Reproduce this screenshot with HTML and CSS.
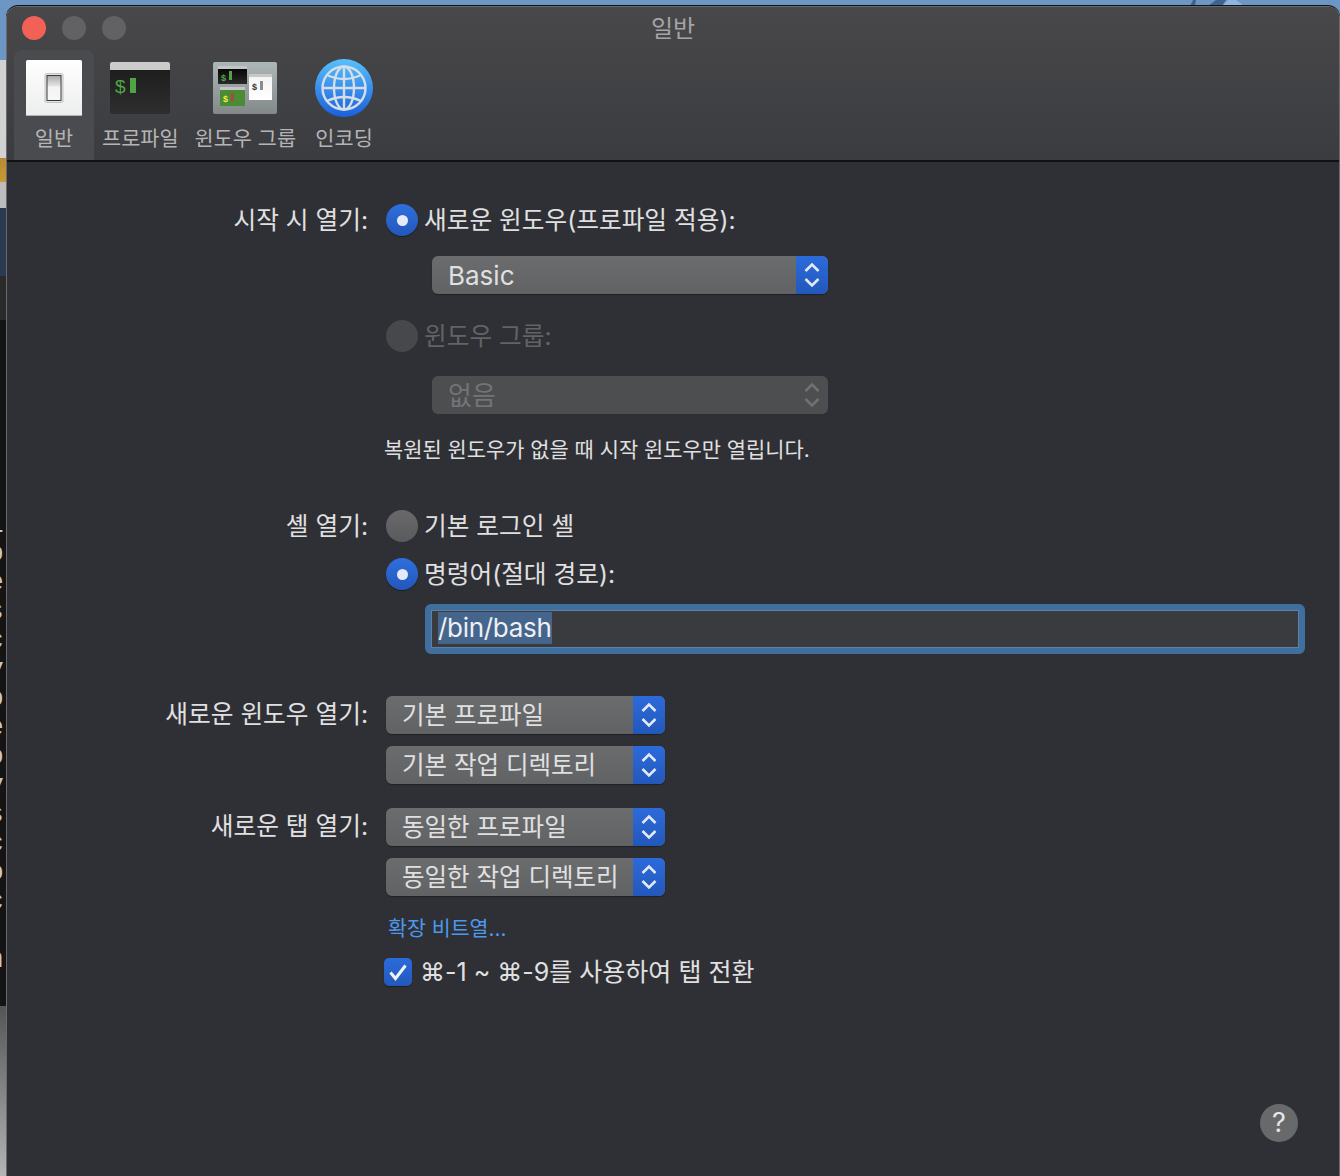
FILE: index.html
```html
<!DOCTYPE html>
<html lang="ko">
<head>
  <meta charset="UTF-8">
  <title>일반</title>
  <link rel="stylesheet" href="styles.css">
</head>
<body>
  <!-- Desktop behind the window -->
  <div class="desktop">
    <div class="seg seg-blue"></div>
    <div class="seg seg-grey"></div>
    <div class="seg seg-yellow"></div>
    <div class="seg seg-pale"></div>
    <div class="seg seg-navy"></div>
    <div class="seg seg-dark"></div>
    <div class="seg seg-term">
      <span>l</span><span>o</span><span>e</span><span>s</span><span>c</span><span>v</span><span>o</span><span>e</span><span>o</span><span>v</span><span>s</span><span>c</span><span>o</span><span>c</span><span>.</span><span>n</span><span>.</span>
    </div>
    <div class="seg seg-foot"></div>
  </div>
  <svg class="wallpaper" width="90" height="6" viewBox="0 0 90 6">
    <path d="M0 6 L3 0 L6 0 L5 6 Z M18 6 L26 0 L36 0 L32 6 Z" fill="#3f628f"/>
    <path d="M32 6 L38 0 L46 0 L54 6 Z" fill="#8fb4e0"/>
  </svg>

  <div class="window">
    <div class="toolbar">
      <div class="titlebar">
        <div class="lights">
          <span class="light light-red"></span>
          <span class="light"></span>
          <span class="light"></span>
        </div>
        <div class="title">일반</div>
      </div>
      <div class="tabs">
        <div class="tab tab-active">
          <svg class="tab-icon" width="56" height="56" viewBox="0 0 56 56">
            <defs>
              <linearGradient id="plate" x1="0" y1="0" x2="0" y2="1">
                <stop offset="0" stop-color="#ffffff"/><stop offset="1" stop-color="#eceded"/>
              </linearGradient>
              <linearGradient id="rocker" x1="0" y1="0" x2="0" y2="1">
                <stop offset="0" stop-color="#a9a9a9"/><stop offset="0.42" stop-color="#e4e4e4"/><stop offset="0.45" stop-color="#f4f4f6"/><stop offset="1" stop-color="#f7f7f9"/>
              </linearGradient>
            </defs>
            <rect width="56" height="56" rx="1.5" fill="url(#plate)"/>
            <rect x="0" y="55" width="56" height="1" fill="#b5b5b5"/>
            <rect x="19" y="13.5" width="18" height="29" rx="1.5" fill="#e3e3e3" stroke="#c4c4c4"/>
            <rect x="21" y="15.5" width="14" height="25" fill="url(#rocker)" stroke="#3a3a3a" stroke-width="1"/>
          </svg>
          <span>일반</span>
        </div>
        <div class="tab">
          <svg class="tab-icon" width="60" height="56" viewBox="0 0 60 56">
            <defs>
              <linearGradient id="term" x1="0" y1="0" x2="0" y2="1">
                <stop offset="0" stop-color="#1b1b1b"/><stop offset="1" stop-color="#2e2e2e"/>
              </linearGradient>
            </defs>
            <rect y="2" width="60" height="52" rx="2" fill="url(#term)"/>
            <path d="M0 10 V4 a2 2 0 0 1 2-2 H58 a2 2 0 0 1 2 2 V10 Z" fill="#cbcbc9"/>
            <text x="5" y="33" class="dollar" font-size="19" fill="#4fa546">$</text>
            <rect x="20" y="18" width="6" height="15" fill="#4fa546"/>
          </svg>
          <span>프로파일</span>
        </div>
        <div class="tab">
          <svg class="tab-icon" width="64" height="56" viewBox="0 0 64 56">
            <defs>
              <linearGradient id="group" x1="0" y1="0" x2="0" y2="1">
                <stop offset="0" stop-color="#adb6b8"/><stop offset="1" stop-color="#838989"/>
              </linearGradient>
              <linearGradient id="blk" x1="0" y1="0" x2="0" y2="1">
                <stop offset="0" stop-color="#000"/><stop offset="1" stop-color="#2a2a2a"/>
              </linearGradient>
              <linearGradient id="wht" x1="0" y1="0" x2="0" y2="1">
                <stop offset="0" stop-color="#f2f2f2"/><stop offset="1" stop-color="#ffffff"/>
              </linearGradient>
            </defs>
            <rect y="2" width="64" height="52" rx="2" fill="url(#group)"/>
            <rect x="5" y="6" width="29" height="18" fill="url(#blk)"/>
            <rect x="5" y="6" width="29" height="3" fill="#c5c5c5"/>
            <text x="8" y="21" class="dollar" font-size="9" font-weight="700" fill="#4fa546">$</text>
            <rect x="16" y="11" width="3" height="9" fill="#4fa546"/>
            <rect x="36" y="14" width="23" height="26" fill="url(#wht)"/>
            <rect x="36" y="14" width="23" height="3" fill="#c8c8c8"/>
            <text x="39" y="30" class="dollar" font-size="9" font-weight="700" fill="#333">$</text>
            <rect x="47" y="21" width="3" height="9" fill="#8c8c8c"/>
            <rect x="7" y="27" width="25" height="19" fill="#4c8b36"/>
            <rect x="7" y="27" width="25" height="3" fill="#c5c5c5"/>
            <text x="10" y="42" class="dollar" font-size="9" font-weight="700" fill="#f2ee3f">$</text>
            <rect x="18" y="33" width="3" height="8" fill="#a84a3e"/>
          </svg>
          <span>윈도우 그룹</span>
        </div>
        <div class="tab">
          <svg class="tab-icon" width="58" height="58" viewBox="0 0 58 58">
            <defs>
              <linearGradient id="ball" x1="0" y1="0" x2="0" y2="1">
                <stop offset="0" stop-color="#58c0fb"/><stop offset="1" stop-color="#1b60dc"/>
              </linearGradient>
            </defs>
            <circle cx="29" cy="29" r="29" fill="url(#ball)"/>
            <g fill="none" stroke="#d5dde6" stroke-width="2.4">
              <circle cx="29" cy="29" r="21.5"/>
              <ellipse cx="29" cy="29" rx="10" ry="21.5"/>
              <path d="M29 7.5 V50.5 M7.5 29 H50.5"/>
              <path d="M12 16 Q29 24 46 16 M12 42 Q29 34 46 42"/>
            </g>
          </svg>
          <span>인코딩</span>
        </div>
      </div>
    </div>

    <div class="content">
      <div class="row row-start">
        <div class="label">시작 시 열기:</div>
        <div class="controls">
          <div class="radio-line">
            <span class="radio radio-on"></span>
            <span>새로운 윈도우(프로파일 적용):</span>
          </div>
          <div class="select select-wide select-latin">
            <span>Basic</span>
            <span class="stepper">
              <svg width="16" height="28" viewBox="0 0 16 28"><path d="M1.5 10 L8 3.5 L14.5 10 M1.5 18 L8 24.5 L14.5 18"/></svg>
            </span>
          </div>
          <div class="radio-line disabled group-radio">
            <span class="radio"></span>
            <span>윈도우 그룹:</span>
          </div>
          <div class="select select-wide select-off">
            <span>없음</span>
            <span class="stepper">
              <svg width="16" height="28" viewBox="0 0 16 28"><path d="M1.5 10 L8 3.5 L14.5 10 M1.5 18 L8 24.5 L14.5 18"/></svg>
            </span>
          </div>
          <div class="note">복원된 윈도우가 없을 때 시작 윈도우만 열립니다.</div>
        </div>
      </div>

      <div class="row row-shell">
        <div class="label">셸 열기:</div>
        <div class="controls">
          <div class="radio-line">
            <span class="radio radio-plain"></span>
            <span>기본 로그인 셸</span>
          </div>
          <div class="radio-line radio-second">
            <span class="radio radio-on"></span>
            <span>명령어(절대 경로):</span>
          </div>
          <div class="field"><span class="field-text">/bin/bash</span></div>
        </div>
      </div>

      <div class="row row-window">
        <div class="label">새로운 윈도우 열기:</div>
        <div class="controls select-stack">
          <div class="select">
            <span>기본 프로파일</span>
            <span class="stepper">
              <svg width="16" height="28" viewBox="0 0 16 28"><path d="M1.5 10 L8 3.5 L14.5 10 M1.5 18 L8 24.5 L14.5 18"/></svg>
            </span>
          </div>
          <div class="select">
            <span>기본 작업 디렉토리</span>
            <span class="stepper">
              <svg width="16" height="28" viewBox="0 0 16 28"><path d="M1.5 10 L8 3.5 L14.5 10 M1.5 18 L8 24.5 L14.5 18"/></svg>
            </span>
          </div>
        </div>
      </div>

      <div class="row row-tab">
        <div class="label">새로운 탭 열기:</div>
        <div class="controls">
          <div class="select-stack">
            <div class="select">
              <span>동일한 프로파일</span>
              <span class="stepper">
                <svg width="16" height="28" viewBox="0 0 16 28"><path d="M1.5 10 L8 3.5 L14.5 10 M1.5 18 L8 24.5 L14.5 18"/></svg>
              </span>
            </div>
            <div class="select">
              <span>동일한 작업 디렉토리</span>
              <span class="stepper">
                <svg width="16" height="28" viewBox="0 0 16 28"><path d="M1.5 10 L8 3.5 L14.5 10 M1.5 18 L8 24.5 L14.5 18"/></svg>
              </span>
            </div>
          </div>
          <div class="link">확장 비트열...</div>
          <div class="check-line">
            <span class="checkbox">
              <svg width="28" height="28" viewBox="0 0 28 28"><path d="M6.5 14.5 L11.5 20.5 L21.5 7.5"/></svg>
            </span>
            <span>⌘-1 ~ ⌘-9를 사용하여 탭 전환</span>
          </div>
        </div>
      </div>

      <div class="help">?</div>
    </div>
  </div>
</body>
</html>
```

FILE: styles.css
```css
html, body {
  margin: 0;
  padding: 0;
  height: 1176px;
  overflow: hidden;
}

body {
  position: relative;
  background-color: #6d96c4;
  font-family: Inter, "Noto Sans CJK KR", sans-serif;
  color: #e0e0e1;
}

/* Desktop strip on the left */
.desktop {
  position: absolute;
  left: 0;
  top: 0;
  width: 6px;
  height: 1176px;
  overflow: hidden;
  display: flex;
  flex-direction: column;
}

.seg-blue { height: 60px; background-color: #6d96c4; }
.seg-grey { height: 98px; background-color: #d2d2d2; }
.seg-yellow { height: 24px; background: linear-gradient(#b98a35, #c69a35); }
.seg-pale { height: 26px; background-color: #bdbdbd; }
.seg-navy { height: 68px; background-color: #2a3a50; }
.seg-dark { height: 44px; background-color: #2a2a2a; }
.seg-foot { flex: 1; background: linear-gradient(#555556, #b4b4b4); }

.seg-term {
  height: 686px;
  box-sizing: border-box;
  padding-top: 190px;
  background-color: #141414;
  display: flex;
  flex-direction: column;
  font-family: "Liberation Mono", monospace;
  font-size: 28px;
  line-height: 29px;
  color: #c8c8c8;
}

.seg-term span {
  margin-left: -13px;
}

.wallpaper {
  position: absolute;
  left: 1190px;
  top: 0;
}

/* Window */
.window {
  position: absolute;
  left: 6px;
  top: 6px;
  width: 1334px;
  height: 1170px;
  box-sizing: border-box;
  background-color: #2f3035;
  border: 1px solid #6a6a6c;
  border-bottom: none;
  border-radius: 12px 12px 0 0;
  box-shadow: 0 -1px 0 #111;
  overflow: hidden;
}

.toolbar {
  height: 155px;
  box-sizing: border-box;
  background: linear-gradient(#48484a, #3b3c40);
  border-bottom: 2px solid #111113;
}

.titlebar {
  position: relative;
  height: 43px;
  display: flex;
  align-items: center;
  justify-content: center;
}

.lights {
  position: absolute;
  left: 15px;
  top: 9px;
  display: flex;
  gap: 16px;
}

.light {
  width: 24px;
  height: 24px;
  border-radius: 50%;
  background-color: #626265;
}

.light-red {
  background-color: #f26156;
}

.title {
  font-size: 24px;
  line-height: 30px;
  color: #a4a4a6;
  margin-top: 1px;
}

.tabs {
  display: flex;
  height: 110px;
  padding-left: 7px;
}

.tab {
  box-sizing: border-box;
  padding: 0 8px;
  height: 110px;
  display: flex;
  flex-direction: column;
  align-items: center;
  font-size: 20.8px;
  line-height: 30px;
  color: #b4b4b6;
}

.tab svg {
  display: block;
  margin-top: 10px;
  margin-bottom: 8px;
}

.tab:last-child {
  padding-left: 11px;
}

.tab:last-child svg {
  margin-top: 9px;
  margin-bottom: 7px;
}

.tab-active {
  width: 80px;
  background-color: #4a4b4e;
  border-radius: 8px 8px 0 0;
}

.dollar {
  font-family: "Liberation Sans", sans-serif;
}

/* Form */
.content {
  position: relative;
  height: 1013px;
  box-sizing: border-box;
  padding-top: 42px;
  font-size: 24.7px;
}

.row {
  display: grid;
  grid-template-columns: 361px 1fr;
  column-gap: 18px;
}

.label {
  text-align: right;
  line-height: 32px;
  height: 32px;
  white-space: nowrap;
}

.row-shell { margin-top: 45px; }
.row-window { margin-top: 42px; }
.row-tab { margin-top: 24px; }

.row-window .label,
.row-tab .label {
  line-height: 36px;
  height: 36px;
}

.radio-line {
  display: flex;
  align-items: center;
  gap: 6px;
  height: 32px;
  line-height: 32px;
  white-space: nowrap;
}

.radio {
  box-sizing: border-box;
  flex: none;
  width: 32px;
  height: 32px;
  border-radius: 50%;
  background-color: #47484b;
  display: flex;
  align-items: center;
  justify-content: center;
}

.radio-on {
  background: linear-gradient(#2f6fde, #2357b9);
  box-shadow: 0 1px 1px rgba(0, 0, 0, 0.4);
}

.radio-on::after {
  content: "";
  width: 11px;
  height: 11px;
  border-radius: 50%;
  background-color: #e4eafa;
}

.radio-plain {
  background: linear-gradient(#69696b, #5a5b5d);
}

.disabled {
  color: #626366;
}

.group-radio { margin-top: 26px; }
.radio-second { margin-top: 16px; }

.select {
  position: relative;
  box-sizing: border-box;
  display: flex;
  align-items: center;
  justify-content: space-between;
  width: 279px;
  height: 38px;
  padding-left: 16px;
  border-radius: 6px;
  background: linear-gradient(#6b6c6e, #616264);
  box-shadow: 0 1px 1px rgba(0, 0, 0, 0.35);
  font-size: 24.5px;
  white-space: nowrap;
  overflow: hidden;
}

/* Hangul sits a bit low in the box, pull it up */
.select > span:first-child {
  margin-bottom: 4px;
}

.select-latin > span:first-child {
  margin-bottom: 0;
}

.select-wide {
  width: 396px;
  margin-left: 46px;
  margin-top: 20px;
  font-size: 26px;
}

.select-off {
  margin-top: 24px;
  background: #4d4e50;
  color: #737477;
  box-shadow: none;
}

.stepper {
  flex: none;
  width: 32px;
  height: 38px;
  display: flex;
  align-items: center;
  justify-content: center;
  background: linear-gradient(#2c6bdc, #2358ba);
}

.stepper svg {
  fill: none;
  stroke: #e3e8f3;
  stroke-width: 2.6;
}

.select-off .stepper {
  background: none;
}

.select-off .stepper svg {
  stroke: #707174;
}

.select-stack {
  display: flex;
  flex-direction: column;
  gap: 12px;
}

.note {
  margin-top: 21px;
  margin-left: -2px;
  height: 30px;
  line-height: 30px;
  font-size: 20.9px;
  white-space: nowrap;
}

.field {
  box-sizing: border-box;
  width: 880px;
  height: 50px;
  margin-top: 14px;
  margin-left: 39px;
  padding: 2px 0 0 7px;
  border: 6px solid #3f6f9f;
  border-radius: 6px;
  background-color: #3a3b3f;
  box-shadow: inset 0 0 0 1px #5f80a3;
  font-size: 26px;
  letter-spacing: -0.3px;
  line-height: 32px;
}

.field-text {
  display: inline-block;
  background-color: #46658c;
  color: #eef0f3;
}

.link {
  margin-top: 18px;
  margin-left: 2px;
  height: 28px;
  line-height: 30px;
  font-size: 20.6px;
  color: #4c99ec;
}

.check-line {
  display: flex;
  align-items: center;
  gap: 8px;
  margin-top: 16px;
  margin-left: -2px;
  height: 28px;
  line-height: 28px;
  font-size: 25px;
  white-space: nowrap;
}

.checkbox {
  flex: none;
  width: 28px;
  height: 28px;
  border-radius: 5px;
  background: linear-gradient(#2c6bdc, #2358ba);
  box-shadow: 0 1px 1px rgba(0, 0, 0, 0.4);
}

.checkbox svg {
  display: block;
  fill: none;
  stroke: #f0f3fa;
  stroke-width: 3;
}

.help {
  position: absolute;
  right: 41px;
  bottom: 33px;
  width: 38px;
  height: 38px;
  border-radius: 50%;
  background-color: #68696b;
  color: #e6e6e7;
  font-size: 27px;
  line-height: 38px;
  text-align: center;
}
```
